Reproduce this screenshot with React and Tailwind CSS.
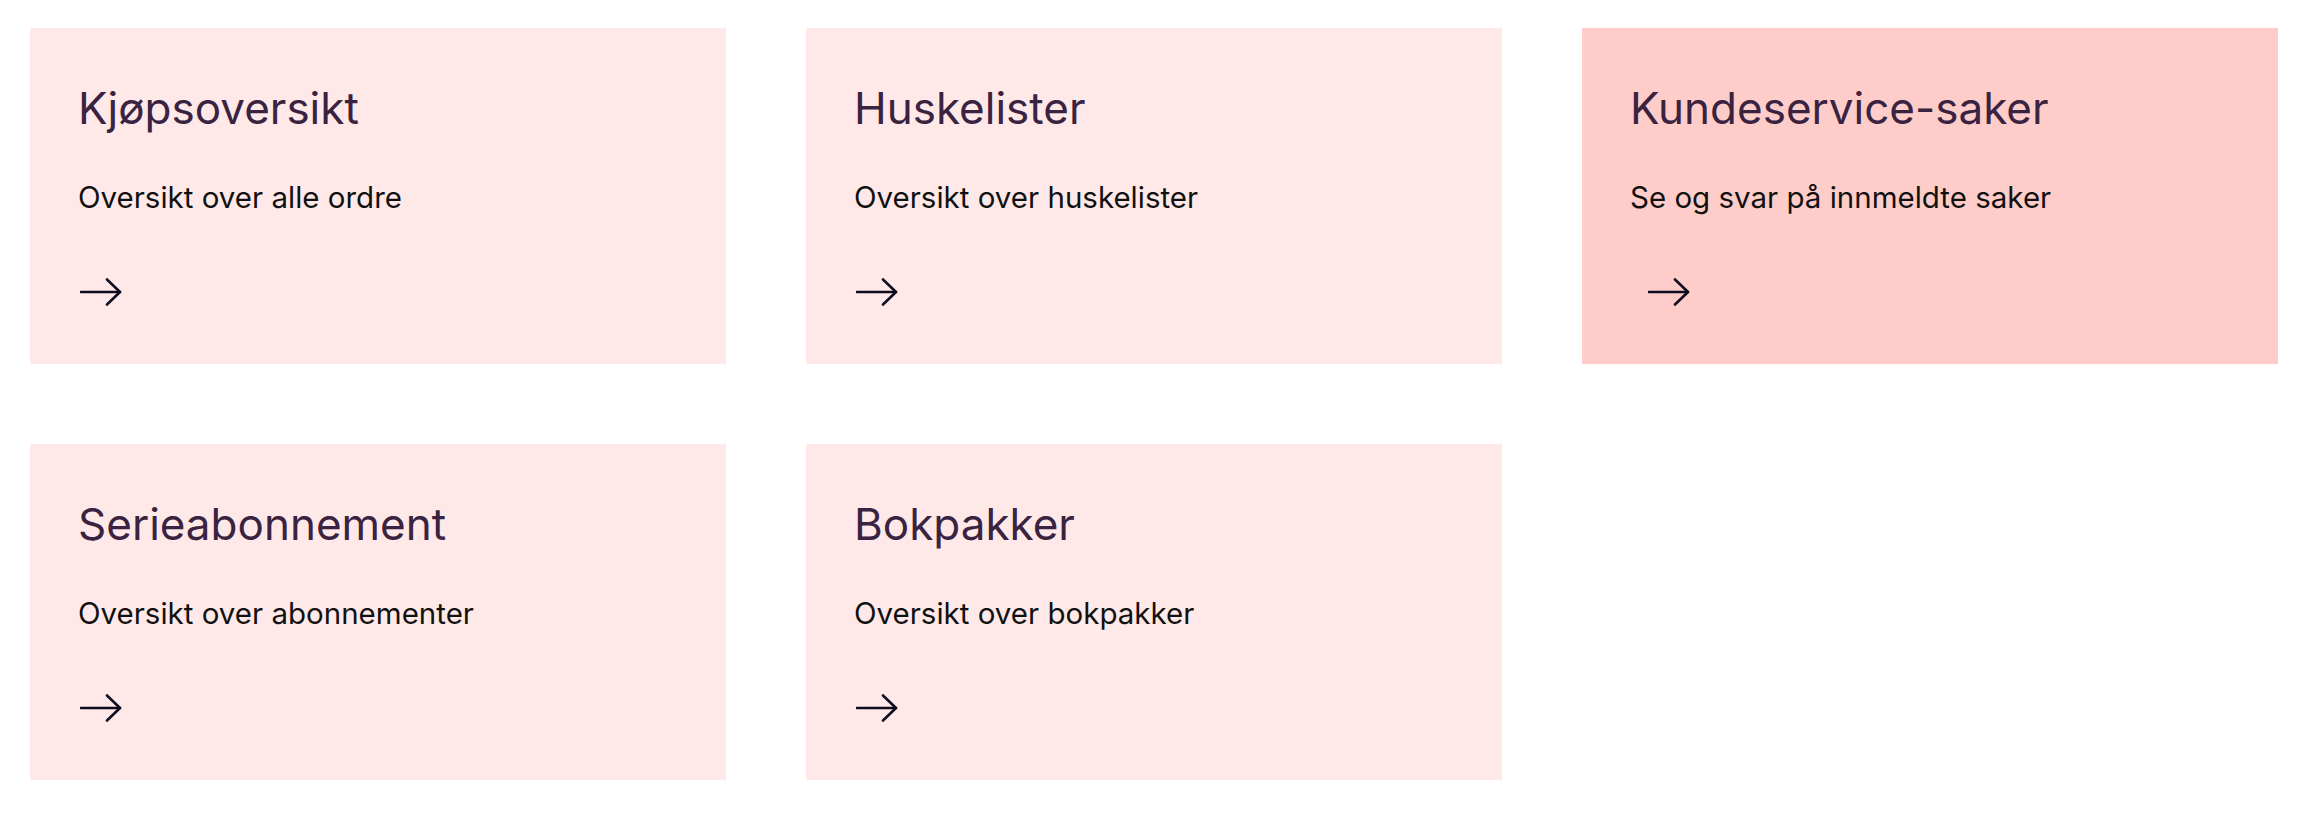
import React from 'react';

const CARDS = [
  { title: 'Kjøpsoversikt', text: 'Oversikt over alle ordre' },
  { title: 'Huskelister', text: 'Oversikt over huskelister' },
  { title: 'Kundeservice-saker', text: 'Se og svar på innmeldte saker', active: true },
  { title: 'Serieabonnement', text: 'Oversikt over abonnementer' },
  { title: 'Bokpakker', text: 'Oversikt over bokpakker' },
];

const Arrow = ({ className }) => (
  <svg viewBox="0 0 42 28" width="42" height="28" fill="none" className={className}>
    <path d="M1 14H40" stroke="#0e0c1f" strokeWidth="2.6" strokeLinecap="round" />
    <path d="M27 1.5L40 14L27 26.5" stroke="#0e0c1f" strokeWidth="2.6" strokeLinecap="round" strokeLinejoin="round" />
  </svg>
);

const Card = ({ title, text, active }) => (
  <a
    href="#"
    className={
      'flex h-[336px] flex-col pl-12 pt-[54px] transition-colors ' +
      (active ? 'bg-[#ffcdc9]' : 'bg-[#ffe9e8] hover:bg-[#ffcdc9]')
    }
  >
    <h2 className="text-[44px] font-normal leading-[53px] text-[#3a2341]">{title}</h2>
    <p className="mt-[44px] text-[29.5px] leading-[36px] text-[#111111]">{text}</p>
    <Arrow className={'mt-[63px] ml-[2px] ' + (active ? 'translate-x-4' : '')} />
  </a>
);

export default function App() {
  return (
    <div className="min-h-screen bg-white pl-[30px] pr-[24px] pt-[28px] font-['Inter',sans-serif]">
      <div className="grid grid-cols-3 gap-x-20 gap-y-20">
        {CARDS.map((c) => (
          <Card key={c.title} {...c} />
        ))}
      </div>
    </div>
  );
}
